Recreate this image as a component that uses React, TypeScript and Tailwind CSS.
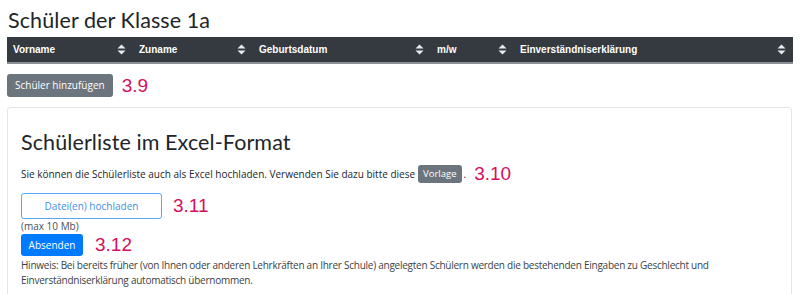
import React from 'react'

const columns = [
  { label: 'Vorname', width: 'w-[126px]' },
  { label: 'Zuname', width: 'w-[120px]' },
  { label: 'Geburtsdatum', width: 'w-[178px]' },
  { label: 'm/w', width: 'w-[83px]' },
  { label: 'Einverständniserklärung', width: 'flex-1' },
]

function SortIcon() {
  return (
    <svg width="9" height="11" viewBox="0 0 9 11" className="shrink-0">
      <path d="M4.5 0.5 L8.5 4.6 H0.5 Z" fill="#e9ecef" />
      <path d="M4.5 10.5 L8.5 6.4 H0.5 Z" fill="#e9ecef" />
    </svg>
  )
}

function Marker({ children }: { children: React.ReactNode }) {
  return (
    <span className="font-['Liberation_Sans',sans-serif] text-[19px] leading-[20px] text-[#d3105e]">{children}</span>
  )
}

export default function App() {
  return (
    <div className="w-[800px] h-[294px] overflow-hidden bg-white px-[7px] pt-[6px] font-['Open_Sans',sans-serif] text-[#212529]">
      <h1 className="font-['Lato',sans-serif] text-[21.5px] leading-[28px] tracking-[0.1px] mb-[3px] pl-[1px]">Schüler der Klasse 1a</h1>

      {/* Tabellenkopf */}
      <div className="flex h-[27px] bg-[#343a40] border-b-2 border-[#8a9096] font-['Liberation_Sans',sans-serif] text-[10px] font-bold text-white">
        {columns.map(col => (
          <div key={col.label} className={`${col.width} flex items-center justify-between pl-[6px] pr-[7px]`}>
            <span>{col.label}</span>
            <SortIcon />
          </div>
        ))}
      </div>

      <div className="flex items-center gap-[9px] mt-[10px]">
        <button className="h-[23px] px-[8px] rounded-[3px] bg-[#6c757d] text-white text-[10px]">Schüler hinzufügen</button>
        <Marker>3.9</Marker>
      </div>

      {/* Karte */}
      <div className="mt-[10px] mr-[1px] border border-[#e3e5e8] rounded-[3px] px-[13px] pt-[20px] pb-[10px]">
        <h2 className="font-['Lato',sans-serif] text-[21.5px] leading-[28px] tracking-[0.1px] mb-[8px]">Schülerliste im Excel-Format</h2>
        <div className="flex items-center text-[10px]">
          <span>Sie können die Schülerliste auch als Excel hochladen. Verwenden Sie dazu bitte diese</span>
          <span className="ml-[3px] px-[5px] h-[18px] flex items-center rounded-[3px] bg-[#6c757d] text-white text-[9.5px]">Vorlage</span>
          <span className="ml-[2px]">.</span>
          <span className="ml-[8px]"><Marker>3.10</Marker></span>
        </div>

        <div className="flex items-center gap-[11px] mt-[9px]">
          <button className="w-[141px] h-[26px] rounded-[3px] border border-[#5aa6f7] text-[#3f8fe6] text-[10px]">Datei(en) hochladen</button>
          <Marker>3.11</Marker>
        </div>
        <div className="text-[10px] text-[#4a4f55] leading-[15px]">(max 10 Mb)</div>
        <div className="flex items-center gap-[12px]">
          <button className="h-[22px] w-[62px] rounded-[3px] bg-[#007bff] text-white text-[10px]">Absenden</button>
          <Marker>3.12</Marker>
        </div>
        <p className="mt-[2px] text-[10px] leading-[15px] tracking-[-0.25px] text-[#3a3f44]">
          Hinweis: Bei bereits früher (von Ihnen oder anderen Lehrkräften an Ihrer Schule) angelegten Schülern werden die bestehenden Eingaben zu Geschlecht und Einverständniserklärung automatisch übernommen.
        </p>
      </div>
    </div>
  )
}
